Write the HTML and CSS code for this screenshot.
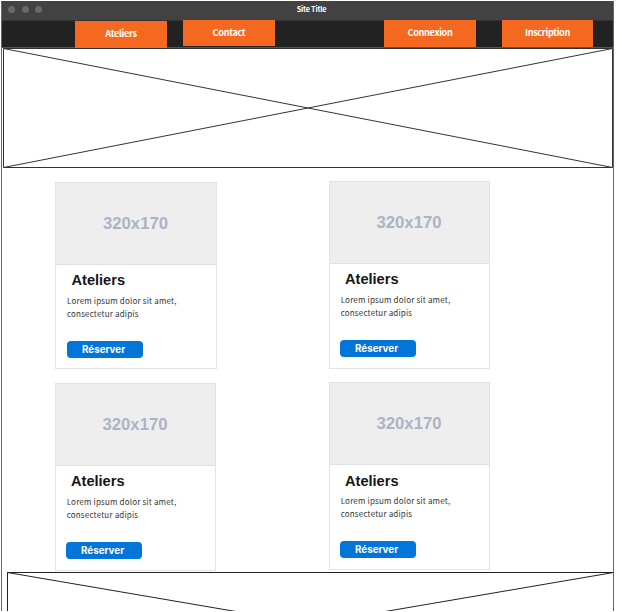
FILE: index.html
```html
<!DOCTYPE html>
<html lang="fr">
<head>
<meta charset="utf-8">
<title>Site Title</title>
<link rel="stylesheet" href="styles.css">
</head>
<body>
<div class="window">
  <header class="titlebar">
    <span class="dots"><i></i><i></i><i></i></span>
    <span class="site-title">Site Title</span>
  </header>
  <nav class="nav">
    <a class="tab tab-workshops">Ateliers</a>
    <a class="tab tab-contact">Contact</a>
    <a class="tab tab-login">Connexion</a>
    <a class="tab tab-signup">Inscription</a>
  </nav>
  <svg class="hero" viewBox="0 0 610 120" fill="none" stroke="#333">
    <path d="M.5 .5H609.5V119.5H.5Z"/>
    <path d="M.5 .5L609.5 119.5M.5 119.5L609.5 .5"/>
  </svg>
  <main class="cards">
    <article class="card card-a">
      <div class="thumb">320x170</div>
      <h2>Ateliers</h2>
      <p>Lorem ipsum dolor sit amet,<br>consectetur adipis</p>
      <a class="btn">Réserver</a>
    </article>
    <article class="card card-b">
      <div class="thumb">320x170</div>
      <h2>Ateliers</h2>
      <p>Lorem ipsum dolor sit amet,<br>consectetur adipis</p>
      <a class="btn">Réserver</a>
    </article>
    <article class="card card-c">
      <div class="thumb">320x170</div>
      <h2>Ateliers</h2>
      <p>Lorem ipsum dolor sit amet,<br>consectetur adipis</p>
      <a class="btn">Réserver</a>
    </article>
    <article class="card card-d">
      <div class="thumb">320x170</div>
      <h2>Ateliers</h2>
      <p>Lorem ipsum dolor sit amet,<br>consectetur adipis</p>
      <a class="btn">Réserver</a>
    </article>
  </main>
  <svg class="footer" viewBox="0 0 607 39" fill="none" stroke="#222">
    <path d="M.5 39V.5H606.5V39"/>
    <path d="M.5 .5L606.5 104M606.5 .5L.5 104"/>
  </svg>
</div>
</body>
</html>
```
FILE: styles.css
```css
* { box-sizing: border-box; }
body {
  margin: 0;
  background: #fff;
  overflow: hidden;
  font-family: "Noto Sans CJK SC", "Open Sans", sans-serif;
}
.window {
  width: 613px;
  height: 610px;
  margin: 1px 0 0 1px;
  border-left: 1px solid #666;
  border-right: 1px solid #666;
  overflow: hidden;
}
.titlebar {
  display: grid;
  grid-template-columns: 1fr auto 1fr;
  align-items: center;
  height: 19px;
  margin: 0 -1px;
  padding: 0 0 3px 7px;
  background: #424242;
}
.dots { display: flex; gap: 6.5px; }
.dots i { width: 7px; height: 7px; border-radius: 50%; background: #696969; }
.site-title {
  margin-left: 1px;
  color: #fff;
  font-size: 7.3px;
  font-weight: bold;
  line-height: 16px;
  letter-spacing: -.25px;
}
.nav {
  display: flex;
  align-items: flex-start;
  height: 28px;
  margin: 0 -1px;
  padding-left: 74px;
  background: linear-gradient(#333 0 1px, #222 1px 27px, #555 27px);
}
.tab {
  width: 92px;
  height: 27px;
  background: #f5681f;
  color: #fff;
  font-size: 9.2px;
  font-weight: bold;
  line-height: 25px;
  letter-spacing: -.37px;
  text-align: center;
}
.tab-workshops { margin-top: 1px; }
.tab-contact { height: 26px; margin-left: 16px; }
.tab-login { margin-left: 109px; }
.tab-signup { width: 91px; margin-left: 26px; }
.hero { display: block; width: 610px; height: 120px; margin-left: 1px; }
.cards {
  display: grid;
  grid-template-columns: 274px 162px;
  grid-template-rows: 201px 190px;
  height: 404px;
  padding: 13px 0 0 53px;
}
.card {
  width: 161px;
  height: 188px;
  border: 1px solid #e3e3e3;
  background: #fff;
}
.card-a { width: 162px; height: 187px; margin-top: 1px; }
.card-c { margin-top: 1px; }
.thumb {
  height: 82px;
  padding-right: 1px;
  border-bottom: 1px solid #e0e0e0;
  background: #eee;
  color: #abb3c6;
  font: bold 16.7px/81px "Liberation Sans", sans-serif;
  text-align: center;
}
.card h2 {
  margin: 5px 0 0 15px;
  color: #151515;
  font: bold 14.6px/20px "Liberation Sans", sans-serif;
}
.card p {
  height: 27px;
  margin: 4px 0 0 10.7px;
  color: #333;
  font-size: 8px;
  line-height: 13px;
  letter-spacing: .18px;
  white-space: nowrap;
}
.btn {
  display: block;
  width: 76px;
  height: 17px;
  margin: 20px 0 0 10px;
  padding-left: 15px;
  border-radius: 4px;
  background: #0275d8;
  color: #fff;
  font: bold 9.8px/18px Inter, sans-serif;
}
.card-a h2 { margin-left: 15.5px; }
.card-a p { margin-left: 11px; }
.card-a .btn { margin-left: 11px; }
.card.card-d h2 { margin-top: 6px; }
.card.card-d p { margin-top: 3px; }
.footer { display: block; width: 607px; height: 39px; margin-left: 5px; }
```
